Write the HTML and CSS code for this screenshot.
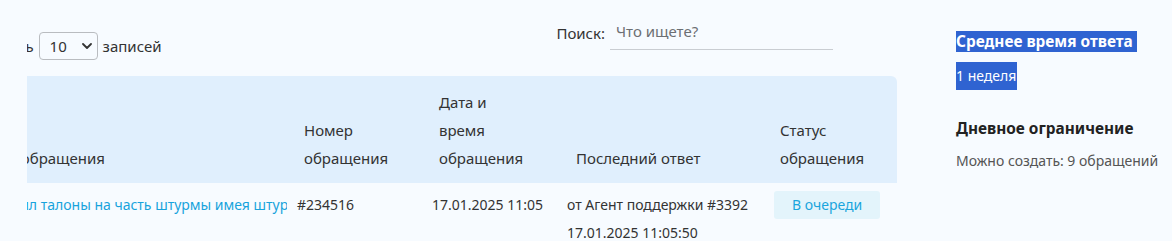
FILE: index.html
```html
<!DOCTYPE html>
<html lang="ru">
<head>
<meta charset="utf-8">
<title>Обращения</title>
<link rel="stylesheet" href="styles.css">
</head>
<body>
<div class="layout">
  <main class="main">
    <div class="main-inner">
      <div class="toolbar">
        <label class="length">Показать
          <span class="select-wrap">
            <select class="select"><option>10</option><option>25</option><option>50</option></select>
            <svg class="chev" width="10" height="6" viewBox="0 0 10 6"><path d="M1 1l4 4 4-4" fill="none" stroke="#333" stroke-width="1.8" stroke-linecap="round" stroke-linejoin="round"/></svg>
          </span>
          записей</label>
        <label class="search">Поиск: <input class="search-input" type="text" placeholder="Что ищете?"></label>
      </div>
      <table class="tickets">
        <colgroup>
          <col class="c1"><col class="c2"><col class="c3"><col class="c4"><col class="c5">
        </colgroup>
        <thead>
          <tr>
            <th class="th-first">Тема обращения</th>
            <th>Номер обращения</th>
            <th>Дата и время обращения</th>
            <th class="th-last-reply">Последний ответ</th>
            <th class="th-status">Статус обращения</th>
          </tr>
        </thead>
        <tbody>
          <tr>
            <td><div class="subject"><a href="#" class="subject-link">Получил талоны на часть штурмы имея штурмовой пропуск</a></div></td>
            <td>#234516</td>
            <td>17.01.2025 11:05</td>
            <td>от Агент поддержки #3392<br>17.01.2025 11:05:50</td>
            <td><span class="badge">В очереди</span></td>
          </tr>
        </tbody>
      </table>
    </div>
  </main>
  <aside class="aside">
    <h3 class="aside-title"><span class="hl">Среднее время ответа&nbsp;</span></h3>
    <p class="aside-value"><span class="hl-block">1 неделя</span></p>
    <h3 class="limit-title">Дневное ограничение</h3>
    <p class="limit-text">Можно создать: 9 обращений</p>
  </aside>
</div>
</body>
</html>
```
FILE: styles.css
```css
html, body {
  margin: 0;
  padding: 0;
}
body {
  background: #f7fbff;
  font-family: "Noto Sans", "Open Sans", sans-serif;
  color: #333;
  font-size: 15px;
}
.layout {
  display: flex;
  align-items: flex-start;
}
.main {
  margin-left: 27px;
  width: 870px;
  overflow: hidden;
  padding-top: 18px;
  flex: none;
}
.main-inner {
  margin-left: -60px;
  width: 930px;
}
.toolbar {
  display: flex;
  justify-content: space-between;
  align-items: flex-start;
  padding-right: 64px;
  height: 42px;
}
.length {
  margin-top: 14px;
  display: flex;
  align-items: center;
  gap: 5px;
  color: #333;
}
.select-wrap {
  position: relative;
  display: inline-flex;
}
.select {
  appearance: none;
  -webkit-appearance: none;
  width: 59px;
  height: 28px;
  border: 1px solid #b9bcc0;
  border-radius: 4px;
  background: #f7fbff;
  font-family: inherit;
  font-size: 15px;
  color: #333;
  padding: 0 0 0 10px;
}
.chev {
  position: absolute;
  right: 6px;
  top: 11px;
  pointer-events: none;
}
.search {
  display: flex;
  align-items: center;
  gap: 5px;
  color: #333;
  margin-top: -2px;
}
.search-input {
  width: 223px;
  height: 34px;
  box-sizing: border-box;
  border: none;
  border-bottom: 1px solid #c9cdd2;
  background: transparent;
  font-family: inherit;
  font-size: 15px;
  padding: 0 6px 4px;
  outline: none;
  color: #333;
}
.search-input::placeholder {
  color: #6c6f73;
}
.tickets {
  margin-top: 16px;
  width: 930px;
  table-layout: fixed;
  border-collapse: separate;
  border-spacing: 0;
}
.c1 { width: 323px; }
.c2 { width: 135px; }
.c3 { width: 135px; }
.c4 { width: 207px; }
.c5 { width: 130px; }
.tickets thead th {
  background: #e0effd;
  font-weight: normal;
  text-align: left;
  vertical-align: bottom;
  font-size: 15px;
  line-height: 28px;
  color: #333;
  padding: 12px 28px 11px 14px;
}
.tickets thead th:last-child {
  border-top-right-radius: 6px;
}
.tickets thead .th-last-reply { padding-left: 16px; }
.tickets thead .th-status { padding-left: 13px; }
.tickets tbody td {
  font-size: 14px;
  line-height: 28px;
  vertical-align: top;
  padding: 8px 7px;
  color: #333;
}
.subject {
  width: 309px;
  padding-left: 4px;
  overflow: hidden;
  white-space: nowrap;
}
.subject-link {
  color: #17a3dc;
  text-decoration: none;
}
.badge {
  display: inline-block;
  background: #e3f4fb;
  color: #1aa5dd;
  border-radius: 3px;
  padding: 0 18px;
  line-height: 28px;
}
.aside {
  margin-left: 59px;
  padding-top: 31px;
  width: 215px;
  flex: none;
}
.aside-title {
  margin: 0;
  font-size: 15.4px;
  font-weight: bold;
  line-height: 22px;
}
.hl {
  background: #2f63d1;
  color: #fff;
}
.aside-value {
  margin: 9px 0 0;
  font-size: 14px;
}
.hl-block {
  display: inline-block;
  background: #2f63d1;
  color: #fff;
  line-height: 28px;
  padding-right: 1px;
}
.limit-title {
  margin: 27px 0 0;
  font-size: 15.4px;
  font-weight: bold;
  color: #222;
  line-height: 24px;
}
.limit-text {
  margin: 10px 0 0;
  font-size: 14px;
  color: #555;
  line-height: 20px;
}
```
